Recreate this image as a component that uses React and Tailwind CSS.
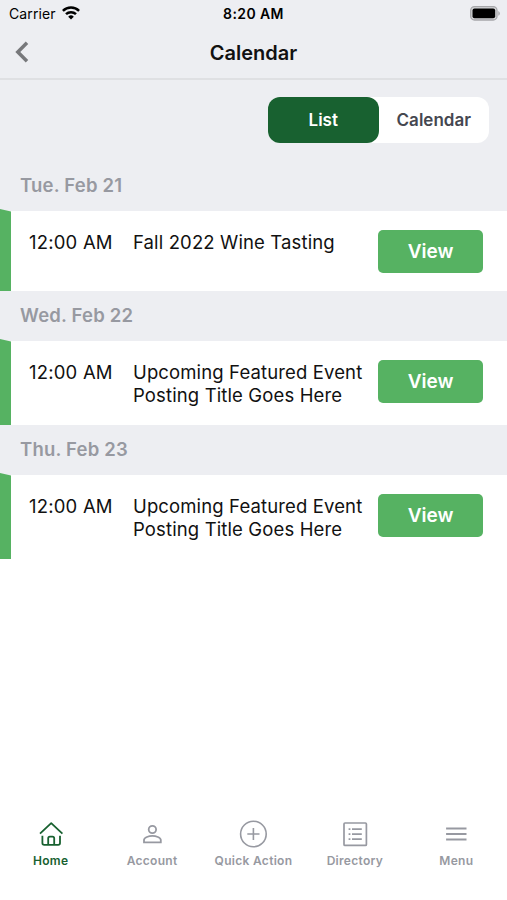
import { useState } from 'react';
import clsx from 'clsx';

const days = [
  { date: 'Tue. Feb 21', time: '12:00 AM', lines: ['Fall 2022 Wine Tasting'], height: 'h-20' },
  { date: 'Wed. Feb 22', time: '12:00 AM', lines: ['Upcoming Featured Event', 'Posting Title Goes Here'], height: 'h-[84px]' },
  { date: 'Thu. Feb 23', time: '12:00 AM', lines: ['Upcoming Featured Event', 'Posting Title Goes Here'], height: 'h-[84px]' },
];

const tabs = [
  { name: 'Home', Icon: HomeIcon },
  { name: 'Account', Icon: AccountIcon },
  { name: 'Quick Action', Icon: PlusIcon },
  { name: 'Directory', Icon: DirectoryIcon },
  { name: 'Menu', Icon: MenuIcon },
];

function HomeIcon() {
  return (
    <svg width="28" height="28" viewBox="0 0 28 28" fill="none" stroke="currentColor" strokeWidth="1.8">
      <path d="M3 13.6 14.2 3.2l11.2 10.4" strokeLinejoin="round" />
      <path d="M5.4 15.8v7.3q0 1.8 1.8 1.8h14q1.8 0 1.8-1.8v-7.3" />
      <path d="M11.2 24.8v-6.5q0-1.7 1.7-1.7h2.6q1.7 0 1.7 1.7v6.5" />
    </svg>
  );
}

function AccountIcon() {
  return (
    <svg width="28" height="28" viewBox="0 0 28 28" fill="none" stroke="currentColor" strokeWidth="1.8">
      <circle cx="14.4" cy="9.5" r="3.7" />
      <path d="M6 22.3v-2.2c0-2.7 5-4.2 8.4-4.2s8.4 1.5 8.4 4.2v2.2z" />
    </svg>
  );
}

function PlusIcon() {
  return (
    <svg width="28" height="28" viewBox="0 0 28 28" fill="none" stroke="currentColor" strokeWidth="1.6">
      <circle cx="14.4" cy="14" r="12.8" />
      <path d="M14.4 7.9v12.2M8.3 14h12.2" />
    </svg>
  );
}

function DirectoryIcon() {
  return (
    <svg width="28" height="28" viewBox="0 0 28 28" fill="none" stroke="currentColor" strokeWidth="1.7">
      <rect x="3" y="3" width="22.4" height="22.4" rx="1" />
      <path d="M11 9.2h9.8M11 14.2h9.8M11 19.2h9.8" />
      <path d="M7.6 9.2h1.8M7.6 14.2h1.8M7.6 19.2h1.8" />
    </svg>
  );
}

function MenuIcon() {
  return (
    <svg width="28" height="28" viewBox="0 0 28 28" fill="none" stroke="currentColor" strokeWidth="2">
      <path d="M4.1 8.4h20.4M4.1 14h20.4M4.1 19.6h20.4" />
    </svg>
  );
}

function StatusBar() {
  return (
    <div className="grid h-7 grid-cols-3 items-center pl-[9px] pr-[7px] text-black">
      <div className="-mt-0.5 flex items-center gap-1.5 text-[14px] tracking-[0.1px]">
        <span>Carrier</span>
        <svg width="18" height="14" viewBox="0 0 18 14" fill="none" stroke="currentColor" strokeWidth="2.5">
          <path d="M.9 4.8a11.7 11.7 0 0 1 16.2 0" />
          <path d="M4 8.2a7.2 7.2 0 0 1 10 0" />
          <path d="M9 13.6 6.2 10.7a4 4 0 0 1 5.6 0z" fill="currentColor" stroke="none" />
        </svg>
      </div>
      <div className="-mt-0.5 -ml-0.5 text-center text-[14px] font-semibold tracking-[0.4px]">8:20 AM</div>
      <svg className="-mt-0.5 justify-self-end" width="30" height="15" viewBox="0 0 30 15">
        <rect x=".7" y=".7" width="26.3" height="13.3" rx="3.8" fill="#d5d6d8" stroke="#a6a7aa" strokeWidth="1.3" />
        <rect x="2.5" y="2.5" width="22.7" height="9.7" rx="2" fill="#000" />
        <path d="M28.3 5v4.8q1.5-.8 1.5-2.4T28.3 5z" fill="#a6a7aa" />
      </svg>
    </div>
  );
}

function EventDay({ day }) {
  return (
    <section>
      <h2 className="flex h-[50px] items-center bg-[#edeef2] pl-5 text-[18.5px] font-semibold tracking-[0.2px] text-[#9799a1]">
        {day.date}
      </h2>
      <div className={clsx('flex items-start bg-white', day.height)}>
        {/* Slanted top edge sits slightly over the date header */}
        <div className="-mt-0.5 w-[11px] shrink-0 self-stretch bg-[#56b262] [clip-path:polygon(0_0,100%_2.5px,100%_100%,0_100%)]" />
        <div className="ml-[18px] mt-5 w-[104px] shrink-0 text-[18.5px] leading-[23px] tracking-[0.2px]">{day.time}</div>
        <div className="mt-5 w-[245px] shrink-0 text-[18.5px] leading-[23px] tracking-[0.13px]">
          {day.lines.map((line) => (
            <p key={line} className="whitespace-nowrap">{line}</p>
          ))}
        </div>
        <button className="mt-[19px] h-[43px] w-[105px] shrink-0 rounded-[5px] bg-[#56b262] pt-0.5 text-[19px] font-semibold text-white">
          View
        </button>
      </div>
    </section>
  );
}

export default function App() {
  const [view, setView] = useState('List');

  return (
    <div className="flex h-[900px] w-[507px] flex-col overflow-hidden bg-white font-['Inter',sans-serif] text-[#111]">
      <header className="h-20 border-b-2 border-[#dfe0e3] bg-[#edeef2]">
        <StatusBar />
        <div className="grid h-12 grid-cols-3 items-center">
          <button className="pl-[15px]">
            <svg width="14" height="22" viewBox="0 0 14 22" fill="none" stroke="#77787b" strokeWidth="3.5">
              <path d="M12 1.8 2.8 11l9.2 9.2" />
            </svg>
          </button>
          <h1 className="pt-px text-center text-[20px] font-semibold">Calendar</h1>
        </div>
      </header>

      <div className="flex h-[81px] shrink-0 justify-end bg-[#edeef2] pr-[18px] pt-[17px]">
        <div className="flex h-[46px] w-[221px] rounded-xl bg-white">
          {['List', 'Calendar'].map((name) => (
            <button
              key={name}
              onClick={() => setView(name)}
              className={clsx(
                'h-full w-1/2 rounded-xl pt-0.5 text-[17px] font-semibold',
                view === name ? 'bg-[#186130] text-white' : 'text-[#454750]'
              )}
            >
              {name}
            </button>
          ))}
        </div>
      </div>

      <main className="flex-1">
        {days.map((day) => (
          <EventDay key={day.date} day={day} />
        ))}
      </main>

      <nav className="grid h-20 grid-cols-5">
        {tabs.map(({ name, Icon }) => (
          <button
            key={name}
            className={clsx(
              'flex flex-col items-center gap-[5px] whitespace-nowrap text-[12px] font-semibold leading-4 tracking-[0.3px]',
              name === 'Home' ? 'text-[#186130]' : 'text-[#9799a1]'
            )}
          >
            <Icon />
            <span>{name}</span>
          </button>
        ))}
      </nav>
    </div>
  );
}
